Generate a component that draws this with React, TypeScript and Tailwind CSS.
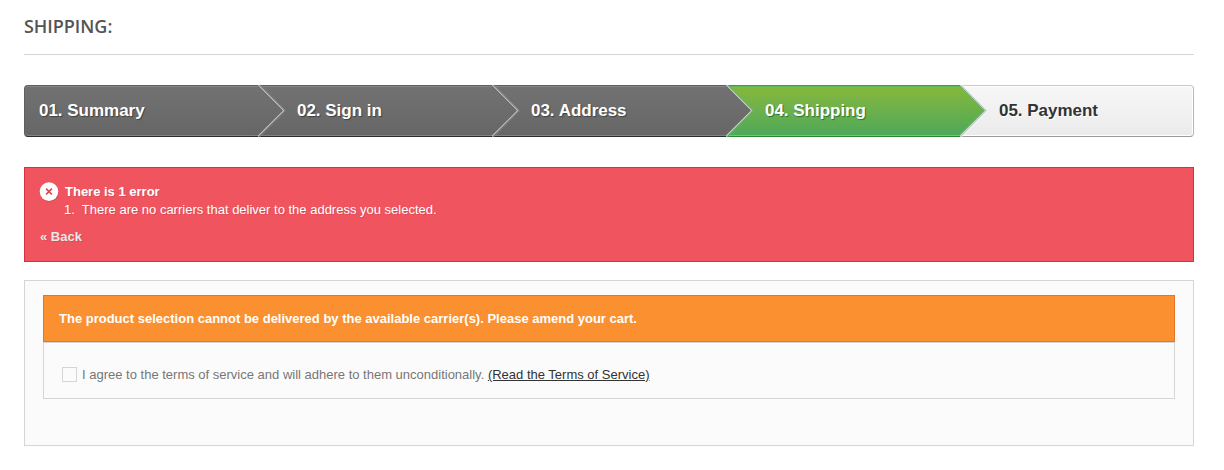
import clsx from "clsx";

type StepState = "done" | "current" | "todo";

const steps: { label: string; state: StepState }[] = [
  { label: "01. Summary", state: "done" },
  { label: "02. Sign in", state: "done" },
  { label: "03. Address", state: "done" },
  { label: "04. Shipping", state: "current" },
  { label: "05. Payment", state: "todo" },
];

const stepStyles: Record<StepState, string> = {
  done: "bg-linear-to-b from-[#727272] to-[#666666] border-t-[#5f5f5f] border-b-[#2e2b2e] text-white [text-shadow:1px_1px_1px_rgba(0,0,0,0.4)] shadow-[inset_0_1px_0_#858585,inset_0_-1px_0_#838383]",
  current:
    "bg-linear-to-b from-[#86b83a] to-[#4da859] border-t-[#399b49] border-b-[#208931] text-white [text-shadow:1px_1px_1px_rgba(0,80,20,0.6)] shadow-[inset_0_1px_0_#62b85a,inset_0_-1px_0_#74c776]",
  todo: "bg-linear-to-b from-[#f7f7f7] to-[#ebebeb] border-t-[#cacaca] border-b-[#9a9a9a] border-r border-r-[#b7b7b7] text-[#333333] [text-shadow:1px_1px_0_#ffffff] shadow-[inset_-1px_1px_0_#ffffff,inset_0_-1px_0_#ffffff] rounded-r",
};

// right hand edge of the finished step, then the left hand edge of the one after it
const arrowColors: Record<StepState, string[]> = {
  done: ["#6a6a6a", "#4e4e4e", "#bdbdbd", "#606060", "#8c8c8c"],
  current: ["#6a6a6a", "#4e4e4e", "#c9c9c9", "#3f9f4d", "#68be6c"],
  todo: ["#68be6c", "#399b49", "#cccccc", "#c4c4c4", "#ffffff"],
};

const Arrow = ({ id, state, next }: { id: string; state: StepState; next: StepState }) => {
  const green = state === "current";
  const [inner, edge, gap, nextEdge, nextInner] = arrowColors[next];

  return (
    <svg className="absolute -top-px left-full z-10" width="32" height="52" viewBox="0.8 0 32 52" fill="none">
      <defs>
        <linearGradient id={id} x1="0" y1="0" x2="0" y2="1">
          <stop offset="0" stopColor={green ? "#86b83a" : "#727272"} />
          <stop offset="1" stopColor={green ? "#4da859" : "#666666"} />
        </linearGradient>
      </defs>
      <path d="M-1 1H1L25.5 25.5L-0.5 51H-1Z" fill={`url(#${id})`} />
      <path d="M2.9 0L28.4 25.5L2.2 52" stroke={nextInner} />
      <path d="M2 0L27.5 25.5L1.2 52" stroke={nextEdge} />
      <path d="M-0.7 0L24.8 25.5L-1.7 52" stroke={inner} />
      <path d="M0 0L25.5 25.5L-1 52" stroke={edge} />
      <path d="M1 0L26.5 25.5L0 52" stroke={gap} strokeWidth="1.3" />
    </svg>
  );
};

const Steps = () => (
  <ul className="mt-[30px] flex h-[52px] text-[17px] font-bold leading-[50px] tracking-[-0.02px]">
    {steps.map(({ label, state }, i) => (
      <li
        key={label}
        className={clsx(
          "relative w-1/5 border-y",
          stepStyles[state],
          i === 0 ? "rounded-l border-l border-l-[#5f5f5f] pl-3.5" : "pl-[39px]"
        )}
      >
        {label}
        {i < steps.length - 1 && <Arrow id={`step-${i}`} state={state} next={steps[i + 1].state} />}
      </li>
    ))}
  </ul>
);

const ErrorBox = () => (
  <section className="mt-[30px] h-[95px] border border-[#d4323d] bg-[#ef545f] px-[15px] pt-[15px] text-[13px] leading-[18px] text-white [text-shadow:1px_1px_0_rgba(0,0,0,0.1)]">
    <div className="flex items-start">
      <svg className="-ml-px -mt-px mr-1.5 shrink-0" width="20" height="20" viewBox="0 0 20 20">
        <circle cx="10.5" cy="10.5" r="9.2" fill="#000000" opacity="0.12" />
        <circle cx="10" cy="9.6" r="9.3" fill="#ffffff" />
        <path d="M7.1 6.7L12.9 12.5M12.9 6.7L7.1 12.5" stroke="#df4550" strokeWidth="1.7" />
      </svg>
      <div>
        <p className="font-bold">There is 1 error</p>
        <ol>
          <li className="-ml-px flex gap-[7px]">
            <span>1.</span>
            <span>There are no carriers that deliver to the address you selected.</span>
          </li>
        </ol>
      </div>
    </div>
    <a href="#" className="mt-[9px] block w-max font-bold text-[#e8e8e8]">
      « Back
    </a>
  </section>
);

const Carriers = () => (
  <section className="mt-[18px] h-[166px] border border-[#d6d4d4] bg-[#fbfbfb] px-[18px] pt-3.5 text-[13px]">
    <p className="h-[47px] border border-[#e4752b] bg-[#fb9030] pl-[15px] font-bold leading-[46px] text-white">
      The product selection cannot be delivered by the available carrier(s). Please amend your cart.
    </p>
    <div className="flex h-[57px] items-start border border-[#d6d4d4] pl-[18px] pt-6 text-[#777777]">
      <span className="mr-[5px] size-[15px] border border-[#d6d4d4] bg-[#fbfbfb]" />
      <label className="leading-4">
        I agree to the terms of service and will adhere to them unconditionally.{" "}
        <a href="#" className="text-[#333333] underline">
          (Read the Terms of Service)
        </a>
      </label>
    </div>
  </section>
);

export default function App() {
  return (
    <main className="h-[470px] bg-white pl-6 pr-[30px] pt-[15px] font-['Liberation_Sans',Arial,sans-serif]">
      <h1 className="h-10 border-b border-[#d6d4d4] font-['Open_Sans',sans-serif] text-[18px] font-semibold leading-[22px] tracking-[-0.04px] text-[#555454]">
        SHIPPING:
      </h1>
      <Steps />
      <ErrorBox />
      <Carriers />
    </main>
  );
}
